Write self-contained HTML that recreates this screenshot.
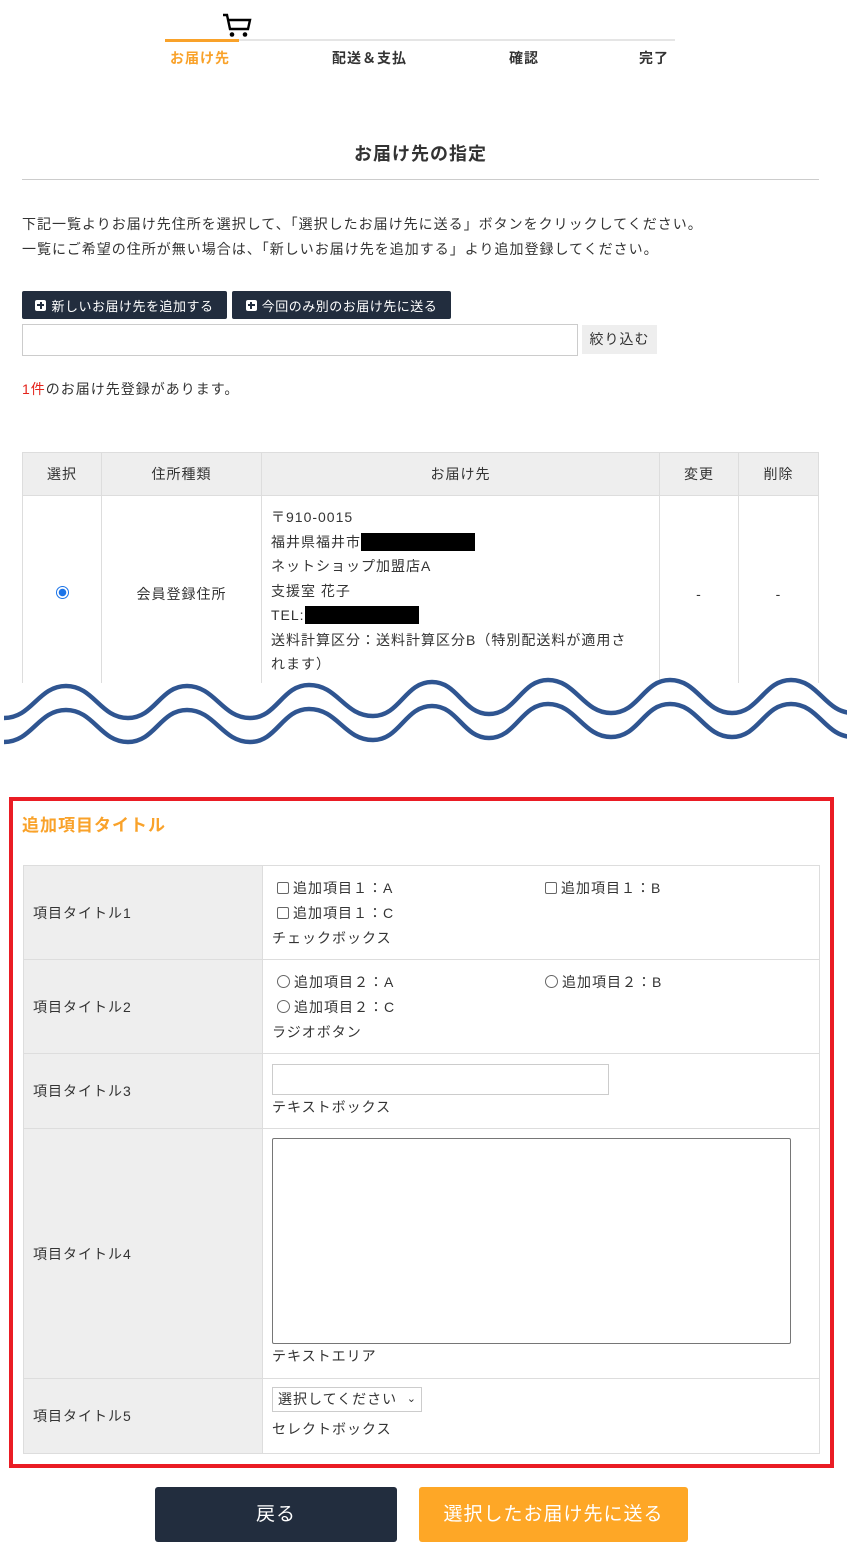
<!DOCTYPE html>
<html><head><meta charset="utf-8"><style>
*{box-sizing:border-box;margin:0;padding:0}
body{width:847px;height:1563px;position:relative;background:#fff;font-family:"Liberation Sans","Noto Sans CJK JP",sans-serif;color:#333;font-size:14px;letter-spacing:1px;overflow:hidden}
.a{position:absolute;white-space:nowrap}
.step{font-weight:bold;font-size:14px;top:48px;color:#333}
.btn{background:#222d3e;color:#fff;font-size:13px;border-radius:2px;display:flex;align-items:center;justify-content:center;letter-spacing:0.5px}
.plus{display:inline-block;width:11px;height:11px;background:#fff;border-radius:2px;position:relative;margin-right:5px}
.plus:before{content:"";position:absolute;left:2px;top:4.5px;width:7px;height:2px;background:#222d3e}
.plus:after{content:"";position:absolute;left:4.5px;top:2px;width:2px;height:7px;background:#222d3e}
table{border-collapse:collapse;position:absolute}
td,th{border:1px solid #ddd;font-weight:normal}
.t1 th{background:#eee;height:43px;font-size:14px}
.t2 td.l{background:#eee;font-size:14px;padding-left:9px}
.t2 td.r{padding-left:9px;vertical-align:top}
.cb{display:inline-block;width:12px;height:12px;border:1px solid #666;border-radius:2px;vertical-align:-1px;margin:0 4px 0 5px}
.rd{display:inline-block;width:13px;height:13px;border:1px solid #666;border-radius:50%;vertical-align:-1px;margin:0 4px 0 5px}
</style></head><body>
<div class="a" style="left:165px;top:39px;width:510px;height:2px;background:#e5e5e5"></div>
<div class="a" style="left:165px;top:39px;width:74px;height:3px;background:#f9a22a"></div>
<svg class="a" style="left:220px;top:12px" width="32" height="28" viewBox="0 0 32 28"><path d="M3 3 H7 L10 17 H28 L30 8 H9" fill="none" stroke="#000" stroke-width="2.4"/><circle cx="12" cy="22.5" r="2.3"/><circle cx="25" cy="22.5" r="2.3"/></svg>
<div class="a step" style="left:170px;color:#f9a22a">お届け先</div>
<div class="a step" style="left:332px">配送＆支払</div>
<div class="a step" style="left:509px">確認</div>
<div class="a step" style="left:639px">完了</div>

<div class="a" style="left:0;width:847px;top:140px;text-align:center;font-weight:bold;font-size:18px;padding-right:6px">お届け先の指定</div>
<div class="a" style="left:22px;top:179px;width:797px;height:1px;background:#ccc"></div>
<div class="a" style="left:22px;top:214px">下記一覧よりお届け先住所を選択して、「選択したお届け先に送る」ボタンをクリックしてください。</div>
<div class="a" style="left:22px;top:239px">一覧にご希望の住所が無い場合は、「新しいお届け先を追加する」より追加登録してください。</div>

<div class="a btn" style="left:22px;top:291px;width:205px;height:28px"><span class="plus"></span>新しいお届け先を追加する</div>
<div class="a btn" style="left:232px;top:291px;width:219px;height:28px"><span class="plus"></span>今回のみ別のお届け先に送る</div>
<div class="a" style="left:22px;top:324px;width:556px;height:32px;border:1px solid #ccc"></div>
<div class="a" style="left:582px;top:325px;width:75px;height:29px;background:#eee;font-size:14px;line-height:29px;text-align:center">絞り込む</div>
<div class="a" style="left:22px;top:379px"><span style="color:#e4231b">1件</span>のお届け先登録があります。</div>

<div class="a" style="left:0;top:0;width:847px;height:683px;overflow:hidden">
<table class="t1" style="left:22px;top:452px;width:797px">
<tr><th style="width:79px">選択</th><th style="width:160px">住所種類</th><th style="width:398px">お届け先</th><th style="width:79px">変更</th><th>削除</th></tr>
<tr><td style="text-align:center"><span style="display:inline-block;width:13px;height:13px;border-radius:50%;border:1px solid #1a73e8;background:radial-gradient(circle,#1a73e8 0 3.5px,#fff 4px)"></span></td>
<td style="text-align:center">会員登録住所</td>
<td style="padding:9px 9px 16px;line-height:24.5px">〒910-0015<br>福井県福井市<span style="display:inline-block;width:114px;height:18px;background:#000;vertical-align:-4px"></span><br>ネットショップ加盟店A<br>支援室 花子<br>TEL:<span style="display:inline-block;width:114px;height:18px;background:#000;vertical-align:-4px"></span><br>送料計算区分：送料計算区分B（特別配送料が適用さ<br>れます）</td>
<td style="text-align:center">-</td><td style="text-align:center">-</td></tr>
</table></div>

<svg class="a" style="left:0;top:660px" width="847" height="100" viewBox="0 660 847 100">
<g fill="none" stroke="#2f5591" stroke-width="4.5">
<path d="M4,718 C32,718 38,686 66,686 C94,686 100,718 128,718 C155,718 160,686 187,686 C215,686 222,718 250,718 C277,718 282,685 309,685 C338,685 344,716 373,716 C400,716 405,682 432,682 C458,682 463,714 489,714 C516,714 521,680 548,680 C576,680 583,713 611,713 C639,713 643,680 670,680 C698,680 704,713 732,713 C759,713 764,680 791,680 C819,680 825,713 853,713"/>
<path transform="translate(0,24)" d="M4,718 C32,718 38,686 66,686 C94,686 100,718 128,718 C155,718 160,686 187,686 C215,686 222,718 250,718 C277,718 282,685 309,685 C338,685 344,716 373,716 C400,716 405,682 432,682 C458,682 463,714 489,714 C516,714 521,680 548,680 C576,680 583,713 611,713 C639,713 643,680 670,680 C698,680 704,713 732,713 C759,713 764,680 791,680 C819,680 825,713 853,713"/>
</g></svg>

<div class="a" style="left:9px;top:797px;width:825px;height:671px;border:4px solid #ea1c24"></div>
<div class="a" style="left:22px;top:811px;color:#f9a22a;font-weight:bold;font-size:17px">追加項目タイトル</div>
<table class="t2" style="left:23px;top:865px;width:797px">
<tr style="height:94px"><td class="l" style="width:239px">項目タイトル1</td><td class="r" style="padding-top:10px;line-height:25px">
<div style="display:flex"><div style="width:268px"><span class="cb"></span>追加項目１：A</div><div><span class="cb"></span>追加項目１：B</div></div>
<div><span class="cb"></span>追加項目１：C</div><div>チェックボックス</div></td></tr>
<tr style="height:94px"><td class="l">項目タイトル2</td><td class="r" style="padding-top:10px;line-height:25px">
<div style="display:flex"><div style="width:268px"><span class="rd"></span>追加項目２：A</div><div><span class="rd"></span>追加項目２：B</div></div>
<div><span class="rd"></span>追加項目２：C</div><div>ラジオボタン</div></td></tr>
<tr style="height:75px"><td class="l">項目タイトル3</td><td class="r" style="padding-top:10px">
<div style="width:337px;height:31px;border:1px solid #ccc"></div><div style="margin-top:2px">テキストボックス</div></td></tr>
<tr style="height:250px"><td class="l">項目タイトル4</td><td class="r" style="padding-top:9px">
<div style="width:519px;height:206px;border:1px solid #767676;border-radius:2px"></div><div style="margin-top:2px">テキストエリア</div></td></tr>
<tr style="height:75px"><td class="l">項目タイトル5</td><td class="r" style="padding-top:8px">
<div style="width:150px;height:25px;border:1px solid #ccc;font-size:14px;line-height:23px;padding-left:5px;position:relative">選択してください<span style="position:absolute;right:4px;top:0;font-size:11px">&#x2304;</span></div><div style="margin-top:7px">セレクトボックス</div></td></tr>
</table>

<div class="a" style="left:155px;top:1487px;width:242px;height:55px;background:#222d3e;border-radius:3px;color:#fff;font-size:19px;text-align:center;line-height:55px">戻る</div>
<div class="a" style="left:419px;top:1487px;width:269px;height:55px;background:#fea726;border-radius:3px;color:#fff;font-size:19px;text-align:center;line-height:55px">選択したお届け先に送る</div>
</body></html>
